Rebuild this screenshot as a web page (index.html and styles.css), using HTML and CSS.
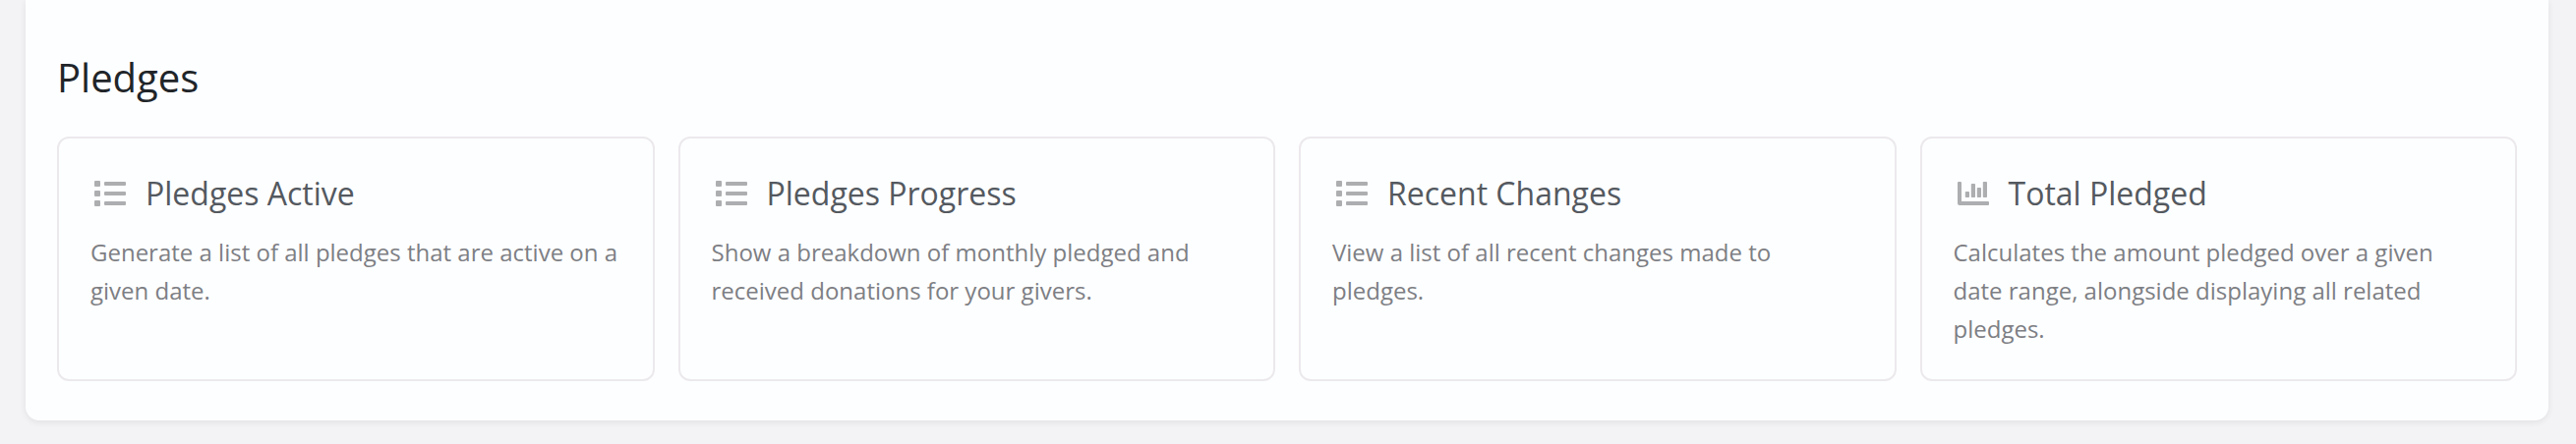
FILE: index.html
```html
<!DOCTYPE html>
<html lang="en">
<head>
<meta charset="utf-8">
<meta name="viewport" content="width=device-width, initial-scale=1">
<title>Pledges</title>
<link rel="stylesheet" href="styles.css">
</head>
<body>
<svg class="sprite" aria-hidden="true">
  <symbol id="list" viewBox="0 0 40 32">
    <rect x="4" y="3" width="6" height="6" rx="1"/>
    <rect x="4" y="13" width="6" height="6" rx="1"/>
    <rect x="4" y="23" width="6" height="6" rx="1"/>
    <rect x="14" y="4" width="22" height="4" rx="1"/>
    <rect x="14" y="14" width="22" height="4" rx="1"/>
    <rect x="14" y="24" width="22" height="4" rx="1"/>
  </symbol>
  <symbol id="chart" viewBox="0 0 40 32">
    <path d="M5 4h2a1 1 0 0 1 1 1v19h27a1 1 0 0 1 1 1v2a1 1 0 0 1-1 1H6a2 2 0 0 1-2-2V5a1 1 0 0 1 1-1z"/>
    <rect x="11.8" y="14" width="4.2" height="6" rx="0.8"/>
    <rect x="17.8" y="6" width="4.2" height="14" rx="0.8"/>
    <rect x="23.8" y="10" width="4.2" height="10" rx="0.8"/>
    <rect x="29.8" y="4" width="4.2" height="16" rx="0.8"/>
  </symbol>
</svg>
<main class="panel">
  <h2 class="heading">Pledges</h2>
  <div class="cards">
    <a class="card" href="#active">
      <h3 class="card-title"><svg class="icon" aria-hidden="true"><use href="#list"/></svg>Pledges Active</h3>
      <p class="card-text">Generate a list of all pledges that are active on a given date.</p>
    </a>
    <a class="card" href="#progress">
      <h3 class="card-title"><svg class="icon" aria-hidden="true"><use href="#list"/></svg>Pledges Progress</h3>
      <p class="card-text">Show a breakdown of monthly pledged and received donations for your givers.</p>
    </a>
    <a class="card" href="#changes">
      <h3 class="card-title"><svg class="icon" aria-hidden="true"><use href="#list"/></svg>Recent Changes</h3>
      <p class="card-text">View a list of all recent changes made to pledges.</p>
    </a>
    <a class="card" href="#total">
      <h3 class="card-title"><svg class="icon" aria-hidden="true"><use href="#chart"/></svg>Total Pledged</h3>
      <p class="card-text">Calculates the amount pledged over a given date range, alongside displaying all related pledges.</p>
    </a>
  </div>
</main>
</body>
</html>
```
FILE: styles.css
```css
* {
  box-sizing: border-box;
}

body {
  margin: 0;
  padding: 0 28px 24px 26px;
  background: #f3f3f5;
  font-family: "Open Sans", "Noto Sans", sans-serif;
}

.sprite {
  display: none;
}

.panel {
  padding: 49px 32px 40px;
  background: #fdfeff;
  border-radius: 0 0 14px 14px;
  box-shadow: 0 2px 6px rgba(60, 40, 60, 0.09);
}

.heading {
  margin: 0 0 30px;
  color: #212529;
  font-size: 40px;
  font-weight: 400;
  line-height: 60px;
}

.cards {
  display: grid;
  grid-template-columns: repeat(4, minmax(0, 1fr));
  gap: 24px;
}

.card {
  padding: 32px;
  border: 2px solid #ece9ed;
  border-radius: 12px;
  text-decoration: none;
}

.card-title {
  display: flex;
  align-items: center;
  gap: 16px;
  margin: 0 0 16px;
  color: #54595f;
  font-size: 32px;
  font-weight: 400;
  line-height: 48px;
}

.icon {
  flex: none;
  width: 40px;
  height: 32px;
  fill: #acaeb0;
}

.card-text {
  margin: 0;
  color: #7d7f84;
  font-size: 24px;
  line-height: 39px;
}
```
